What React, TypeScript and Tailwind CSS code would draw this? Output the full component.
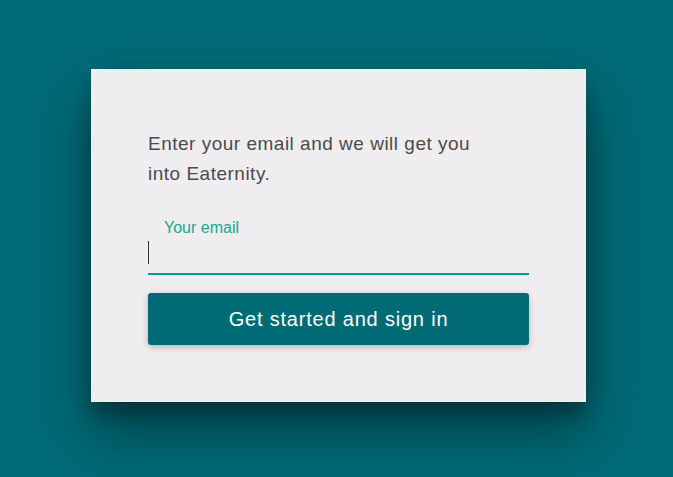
export default function App() {
  return (
    <div
      className="w-[673px] h-[477px] bg-[#016b77] pt-[69px] pl-[91px] overflow-hidden"
      style={{ fontFamily: '"Liberation Sans", Arial, sans-serif' }}
    >
      <div className="w-[495px] h-[333px] bg-[#efedf0] px-[57px] pt-[60px] shadow-[0_30px_55px_rgba(0,0,0,0.42),0_12px_16px_rgba(0,0,0,0.25)]">
        <p className="text-[19px] leading-[30px] tracking-[0.5px] text-[#4b4b4d] w-[340px]">
          Enter your email and we will get you into Eaternity.
        </p>

        <div className="mt-[30px]">
          <label className="block pl-[16px] text-[16px] leading-[18px] text-[#17a88f]">
            Your email
          </label>
          <div className="relative mt-[2px] h-[36px] border-b-2 border-[#00998a]">
            <span className="absolute left-0 top-[2px] h-[23px] w-px bg-[#333]" />
          </div>
        </div>

        <button className="mt-[18px] w-full h-[52px] rounded-[3px] bg-[#006a75] text-white text-[20px] tracking-[0.8px] shadow-[0_2px_6px_rgba(0,0,0,0.25)]">
          Get started and sign in
        </button>
      </div>
    </div>
  );
}
